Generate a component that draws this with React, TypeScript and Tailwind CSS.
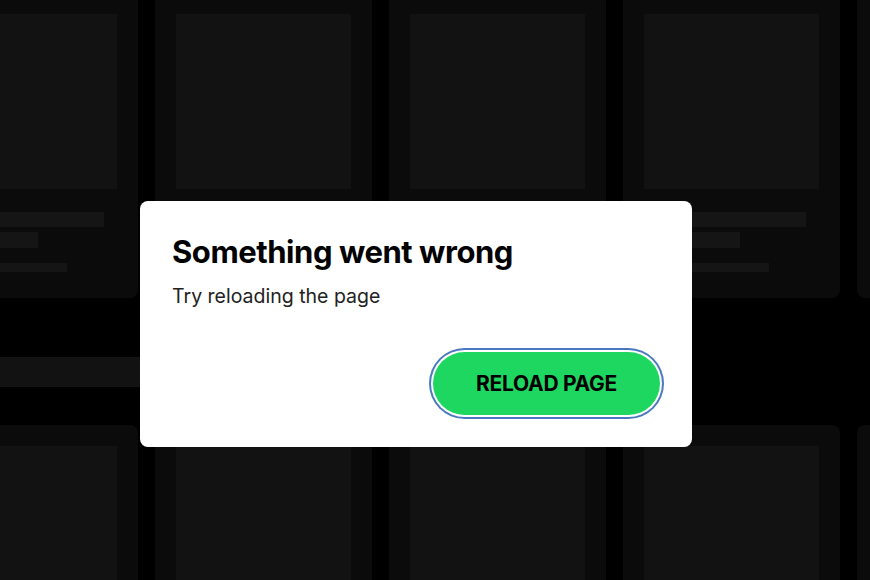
const cards = [0, 1, 2, 3, 4];

function SkeletonCard({ withLines = true }: { withLines?: boolean }) {
  return (
    <div className="flex h-[305px] w-[217px] shrink-0 flex-col rounded-lg bg-[#0b0b0b] px-[21px] pt-[21px] pb-[26px]">
      <div className="h-[175px] w-full bg-[#121212]" />
      {withLines && (
        <>
          <div className="mt-[23px] h-[15px] w-[162px] bg-[#151515]" />
          <div className="mt-[5px] h-[16px] w-[96px] bg-[#151515]" />
          <div className="mt-[15px] h-[9px] w-[125px] bg-[#151515]" />
        </>
      )}
    </div>
  );
}

function ErrorDialog() {
  return (
    <div className="absolute left-[140px] top-[201px] flex w-[552px] flex-col rounded-lg bg-white p-[32px] font-['Inter',sans-serif]">
      <h1 className="text-[31px] leading-[38px] font-bold tracking-[-0.45px] text-black">
        Something went wrong
      </h1>
      <p className="mt-[12px] text-[19.5px] leading-[26px] text-[#222]">Try reloading the page</p>
      <div className="mt-[43px] flex justify-end">
        <button className="flex h-[63px] w-[227px] items-center justify-center rounded-full bg-[#1ed760] text-[21px] font-bold tracking-[-0.3px] text-black ring-2 ring-[#4a78c0] ring-offset-2 ring-offset-white">
          RELOAD PAGE
        </button>
      </div>
    </div>
  );
}

export default function App() {
  return (
    <div className="relative h-[580px] w-[870px] overflow-hidden bg-black">
      {/* skeleton grid behind the dialog */}
      <div className="ml-[-79px] mt-[-7px] flex flex-col">
        <div className="flex gap-[17px]">
          {cards.map((i) => (
            <SkeletonCard key={i} />
          ))}
        </div>
        <div className="mt-[59px] h-[30px] w-[420px] bg-[#121212]" />
        <div className="mt-[38px] flex gap-[17px]">
          {cards.map((i) => (
            <SkeletonCard key={i} />
          ))}
        </div>
      </div>

      <ErrorDialog />
    </div>
  );
}
